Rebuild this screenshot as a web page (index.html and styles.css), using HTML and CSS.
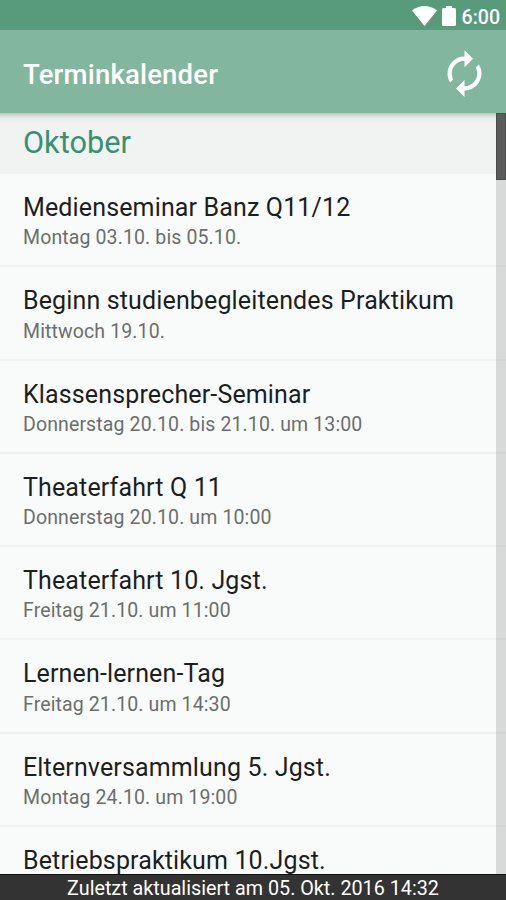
FILE: index.html
```html
<!DOCTYPE html>
<html lang="de">
<head>
    <meta charset="UTF-8">
    <meta name="viewport" content="width=device-width, initial-scale=1.0">
    <title>Terminkalender</title>
    <link rel="stylesheet" href="styles.css">
</head>
<body>
    <div class="statusbar">
        <svg class="wifi" viewBox="0 0 25 20"><path d="M0 4.5C7-1.5 18-1.5 25 4.5L12.5 20z"/></svg>
        <svg class="battery" viewBox="0 0 14 20"><path d="M4 0h6v2h2.500q1.500 0 1.500 1.500v15q0 1.500-1.500 1.500h-11Q0 20 0 18.500v-15Q0 2 1.500 2H4z"/></svg>
        <span class="clock">6:00</span>
    </div>
    <header class="toolbar">
        <h1>Terminkalender</h1>
        <button class="refresh" type="button" aria-label="Aktualisieren">
            <svg viewBox="0 0 24 24"><path d="M12 6v3l4-4-4-4v3c-4.420 0-8 3.580-8 8 0 1.570.46 3.030 1.240 4.260L6.700 14.800c-.45-.83-.7-1.790-.7-2.800 0-3.310 2.690-6 6-6zm6.760 1.740L17.300 9.200c.44.84.7 1.790.7 2.800 0 3.310-2.690 6-6 6v-3l-4 4 4 4v-3c4.420 0 8-3.580 8-8 0-1.570-.46-3.030-1.240-4.260z"/></svg>
        </button>
    </header>
    <main class="content">
        <div class="list">
            <h2>Oktober</h2>
            <div class="event">
                <span class="title">Medienseminar Banz Q11/12</span>
                <span class="date">Montag 03.10. bis 05.10.</span>
            </div>
            <div class="event">
                <span class="title">Beginn studienbegleitendes Praktikum</span>
                <span class="date">Mittwoch 19.10.</span>
            </div>
            <div class="event">
                <span class="title">Klassensprecher-Seminar</span>
                <span class="date">Donnerstag 20.10. bis 21.10. um 13:00</span>
            </div>
            <div class="event">
                <span class="title">Theaterfahrt Q 11</span>
                <span class="date">Donnerstag 20.10. um 10:00</span>
            </div>
            <div class="event">
                <span class="title">Theaterfahrt 10. Jgst.</span>
                <span class="date">Freitag 21.10. um 11:00</span>
            </div>
            <div class="event">
                <span class="title">Lernen-lernen-Tag</span>
                <span class="date">Freitag 21.10. um 14:30</span>
            </div>
            <div class="event">
                <span class="title">Elternversammlung 5. Jgst.</span>
                <span class="date">Montag 24.10. um 19:00</span>
            </div>
            <div class="event">
                <span class="title">Betriebspraktikum 10.Jgst.</span>
            </div>
        </div>
        <div class="scrollbar"><div class="thumb"></div></div>
    </main>
    <footer class="updated">Zuletzt aktualisiert am 05. Okt. 2016 14:32</footer>
</body>
</html>
```
FILE: styles.css
```css
* {
    box-sizing: border-box;
}
body {
    margin: 0;
    height: 900px;
    display: flex;
    flex-direction: column;
    overflow: hidden;
    font-family: Roboto, sans-serif;
    background-color: #f9fbfa;
}
.statusbar {
    flex: none;
    display: flex;
    align-items: center;
    justify-content: flex-end;
    height: 30px;
    padding: 2px 6px 0 0;
    background-color: #579b7b;
    color: #fff;
}
.statusbar svg {
    height: 20px;
    fill: #fff;
}
.wifi {
    width: 25px;
    margin-right: 5px;
}
.battery {
    width: 14px;
    margin-right: 6px;
}
.clock {
    padding-top: 3px;
    font-size: 19.500px;
    font-weight: 500;
    line-height: 28px;
}
.toolbar {
    flex: none;
    display: flex;
    align-items: center;
    justify-content: space-between;
    height: 83px;
    padding: 0 16px 0 23px;
    background-color: #82b69e;
}
h1 {
    margin: 0;
    padding-top: 7px;
    color: #fff;
    font-size: 27.500px;
    font-weight: 500;
    line-height: 32px;
    letter-spacing: 0.2px;
}
.refresh {
    width: 51px;
    height: 51px;
    padding: 0;
    margin-top: 4px;
    border: none;
    background: none;
}
.refresh svg {
    display: block;
    width: 51px;
    height: 51px;
    fill: #fff;
}
.content {
    position: relative;
    flex: 1;
    min-height: 0;
    overflow: hidden;
}
h2 {
    margin: 0;
    height: 61px;
    padding: 10px 23px 0;
    background: linear-gradient(#bcbfbd, #dfe1e0 3px, #edeeee 7px, #f1f3f2 12px);
    color: #389170;
    font-size: 30.700px;
    font-weight: 400;
    line-height: 40px;
}
.event {
    display: flex;
    flex-direction: column;
    height: 93.3px;
    padding: 18px 23px 0;
    border-bottom: 2px solid #f0f3f2;
    white-space: nowrap;
}
.title {
    color: #1d1e1e;
    font-size: 25px;
    line-height: 32px;
    letter-spacing: 0.14px;
}
.date {
    padding-top: 0.3px;
    color: #6c6e6d;
    font-size: 19.500px;
    line-height: 28px;
    letter-spacing: 0.12px;
}
/* lies over the list, so the dividers show through */
.scrollbar {
    position: absolute;
    top: 0;
    right: 0;
    bottom: 0;
    width: 10px;
    background-color: rgba(0, 0, 0, 0.13);
}
.thumb {
    height: 67px;
    background-color: #5c5c5c;
    border: 1px solid #4b4b4b;
}
.updated {
    flex: none;
    height: 26px;
    border-top: 1px solid #111;
    background-color: #333;
    color: #fff;
    font-size: 19.750px;
    line-height: 27px;
    text-align: center;
}
```
